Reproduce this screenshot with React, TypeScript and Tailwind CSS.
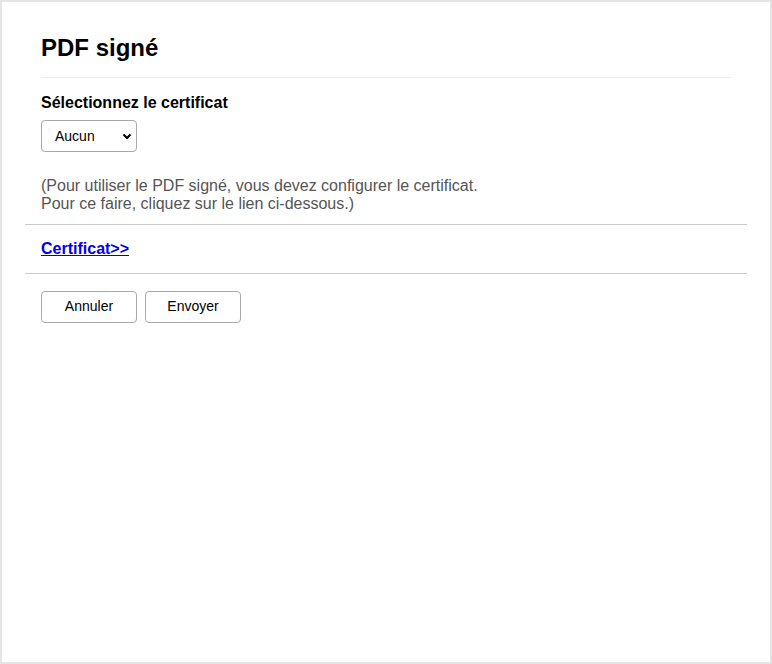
import { useState } from 'react';

export default function App() {
  const [cert, setCert] = useState('none');

  return (
    <div className="w-[772px] h-[664px] border-2 border-[#e5e5e5] bg-white font-['Liberation_Sans',Arial,sans-serif] text-black">
      <div className="px-[23px]">
        {/* Title */}
        <div className="px-4 pt-[32px]">
          <h1 className="text-[24px] leading-[28px] font-bold">PDF signé</h1>
          <div className="mt-[15px] h-px bg-[#ebebeb]" />

          {/* Certificate select */}
          <label htmlFor="cert" className="block mt-[16px] text-[16px] leading-[18px] font-bold">
            Sélectionnez le certificat
          </label>
          <div className="relative mt-[8px] w-[96px] h-[32px]">
            <select
              id="cert"
              value={cert}
              onChange={(e) => setCert(e.target.value)}
              className="appearance-none w-full h-full rounded-[4px] border border-[#a8a8a8] bg-white pl-[13px] pr-6 text-[14px] text-black"
            >
              <option value="none">Aucun</option>
            </select>
            <svg
              className="pointer-events-none absolute right-[5px] top-[13px]"
              width="10"
              height="7"
              viewBox="0 0 10 7"
            >
              <path d="M1.5 1.5 L5 5 L8.5 1.5" fill="none" stroke="#000" strokeWidth="2" />
            </svg>
          </div>

          <p className="mt-[25px] text-[16px] leading-[18.4px] text-[#555555]">
            (Pour utiliser le PDF signé, vous devez configurer le certificat.
            <br />
            Pour ce faire, cliquez sur le lien ci-dessous.)
          </p>
        </div>

        <div className="mt-[10px] h-px bg-[#cccccc]" />

        {/* Link */}
        <div className="px-4 mt-[12px]">
          <a href="#" className="text-[16px] leading-[18px] font-bold text-[#0000ee] underline">
            Certificat&gt;&gt;
          </a>
        </div>

        <div className="mt-[12px] h-px bg-[#cccccc]" />

        {/* Buttons */}
        <div className="px-4 mt-[17px] flex gap-2">
          <button className="w-[96px] h-[32px] rounded-[4px] border border-[#a8a8a8] bg-white text-[14px] text-black">
            Annuler
          </button>
          <button className="w-[96px] h-[32px] rounded-[4px] border border-[#a8a8a8] bg-white text-[14px] text-black">
            Envoyer
          </button>
        </div>
      </div>
    </div>
  );
}
